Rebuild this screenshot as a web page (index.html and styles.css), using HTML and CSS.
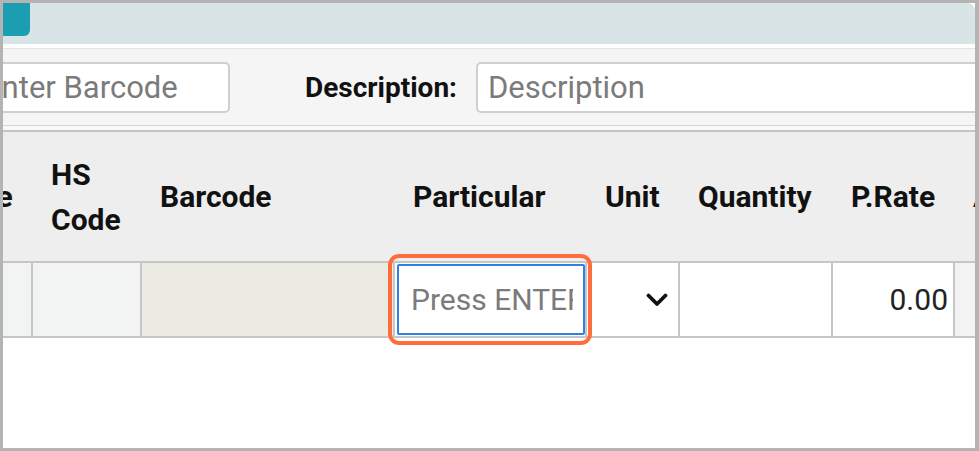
FILE: index.html
```html
<!DOCTYPE html>
<html lang="en">
<head>
<meta charset="utf-8">
<title>Purchase Entry</title>
<link rel="stylesheet" href="styles.css">
</head>
<body>
<div class="frame">
  <div class="topbar"><div class="tab-btn"></div></div>
  <div class="filters">
    <input class="field barcode-input" type="text" placeholder="Enter Barcode">
    <label class="desc-label">Description:</label>
    <input class="field desc-input" type="text" placeholder="Description">
  </div>
  <div class="gap"></div>
  <div class="table-wrap">
    <div class="grid">
      <div class="th">Type</div>
      <div class="th">HS<br>Code</div>
      <div class="th">Barcode</div>
      <div class="th">Particular</div>
      <div class="th">Unit</div>
      <div class="th">Quantity</div>
      <div class="th">P.Rate</div>
      <div class="th">Amount</div>

      <div class="td td-muted"></div>
      <div class="td td-muted"></div>
      <div class="td td-barcode"></div>
      <div class="td td-particular"><input class="cell-input" type="text" placeholder="Press ENTER to search"></div>
      <div class="td td-unit">
        <svg class="chevron" width="22" height="14" viewBox="0 0 22 14"><path d="M2.5 2.5 L11 11 L19.5 2.5" fill="none" stroke="#111" stroke-width="3.8" stroke-linecap="round" stroke-linejoin="round"/></svg>
      </div>
      <div class="td"></div>
      <div class="td td-num">0.00</div>
      <div class="td td-last"></div>
    </div>
  </div>
</div>
</body>
</html>
```
FILE: styles.css
```css
*, *::before, *::after { box-sizing: border-box; }
html, body { margin: 0; padding: 0; background: #ffffff; }
body { font-family: Roboto, "Liberation Sans", Arial, sans-serif; color: #111; }

.frame {
  width: 979px;
  height: 451px;
  border: 3px solid #b4b4b4;
  border-right-width: 4px;
  overflow: hidden;
  background: #ffffff;
}

.topbar {
  height: 41px;
  background: #d8e4e5;
  border-top-right-radius: 8px;
}
.tab-btn {
  width: 27px;
  height: 33px;
  background: #1b9db2;
  border-bottom-right-radius: 6px;
}

.filters {
  margin-top: 4px;
  height: 78px;
  border-top: 1px solid #e4e4e4;
  border-bottom: 1px solid #d6d6d6;
  background: #f5f5f5;
  display: flex;
  align-items: center;
  margin-left: -31px;
}
.field {
  height: 51px;
  border: 2px solid #cfcfcf;
  border-radius: 5px;
  background: #ffffff;
  font-family: Roboto, "Liberation Sans", Arial, sans-serif;
  font-size: 31px;
  padding: 0 10px;
  color: #222;
  outline: none;
}
.field::placeholder { color: #7b7b7b; }
.barcode-input { width: 258px; flex: none; }
.desc-label {
  margin-left: 75px;
  font-size: 28px;
  font-weight: 700;
  color: #111;
  flex: none;
}
.desc-input { margin-left: 19px; width: 620px; flex: none; }

.gap { height: 4px; background: #f8f8f8; }

.table-wrap {
  border-top: 2px solid #c4c4c4;
}
.grid {
  display: grid;
  grid-template-columns: 104px 109px 253px 192px 93px 153px 122px 160px;
  margin-left: -74px;
}
.th {
  height: 131px;
  background: #eeeeee;
  border-bottom: 2px solid #c6c6c6;
  padding-left: 18px;
  display: flex;
  align-items: center;
  font-size: 30px;
  font-weight: 700;
  line-height: 45px;
  color: #111;
}
.td {
  height: 75px;
  border-right: 2px solid #c6c6c6;
  border-bottom: 2px solid #c6c6c6;
  background: #ffffff;
}
.td-muted { background: #f2f4f3; }
.td-barcode { background: #ebebe4; }
.td-last { background: #f3f3f3; border-right: none; }

.td-particular {
  position: relative;
  padding: 1px 0 1px 2px;
}
.td-particular::after {
  content: "";
  position: absolute;
  left: -7px;
  top: -9px;
  width: 204px;
  height: 91px;
  border: 4px solid #ff6d3d;
  border-radius: 11px;
  pointer-events: none;
  z-index: 2;
}
.cell-input {
  width: 100%;
  height: 100%;
  border: 2px solid #2f7fe6;
  border-radius: 2px;
  padding: 0 10px 0 12px;
  font-family: Roboto, "Liberation Sans", Arial, sans-serif;
  font-size: 30px;
  color: #222;
  background: #ffffff;
  outline: none;
}
.cell-input::placeholder { color: #7b7b7b; }

.td-unit {
  display: flex;
  align-items: center;
  justify-content: flex-end;
  padding-right: 10px;
}
.chevron { display: block; }

.td-num {
  display: flex;
  align-items: center;
  justify-content: flex-end;
  padding-right: 5px;
  font-size: 30px;
  color: #222;
}
```
